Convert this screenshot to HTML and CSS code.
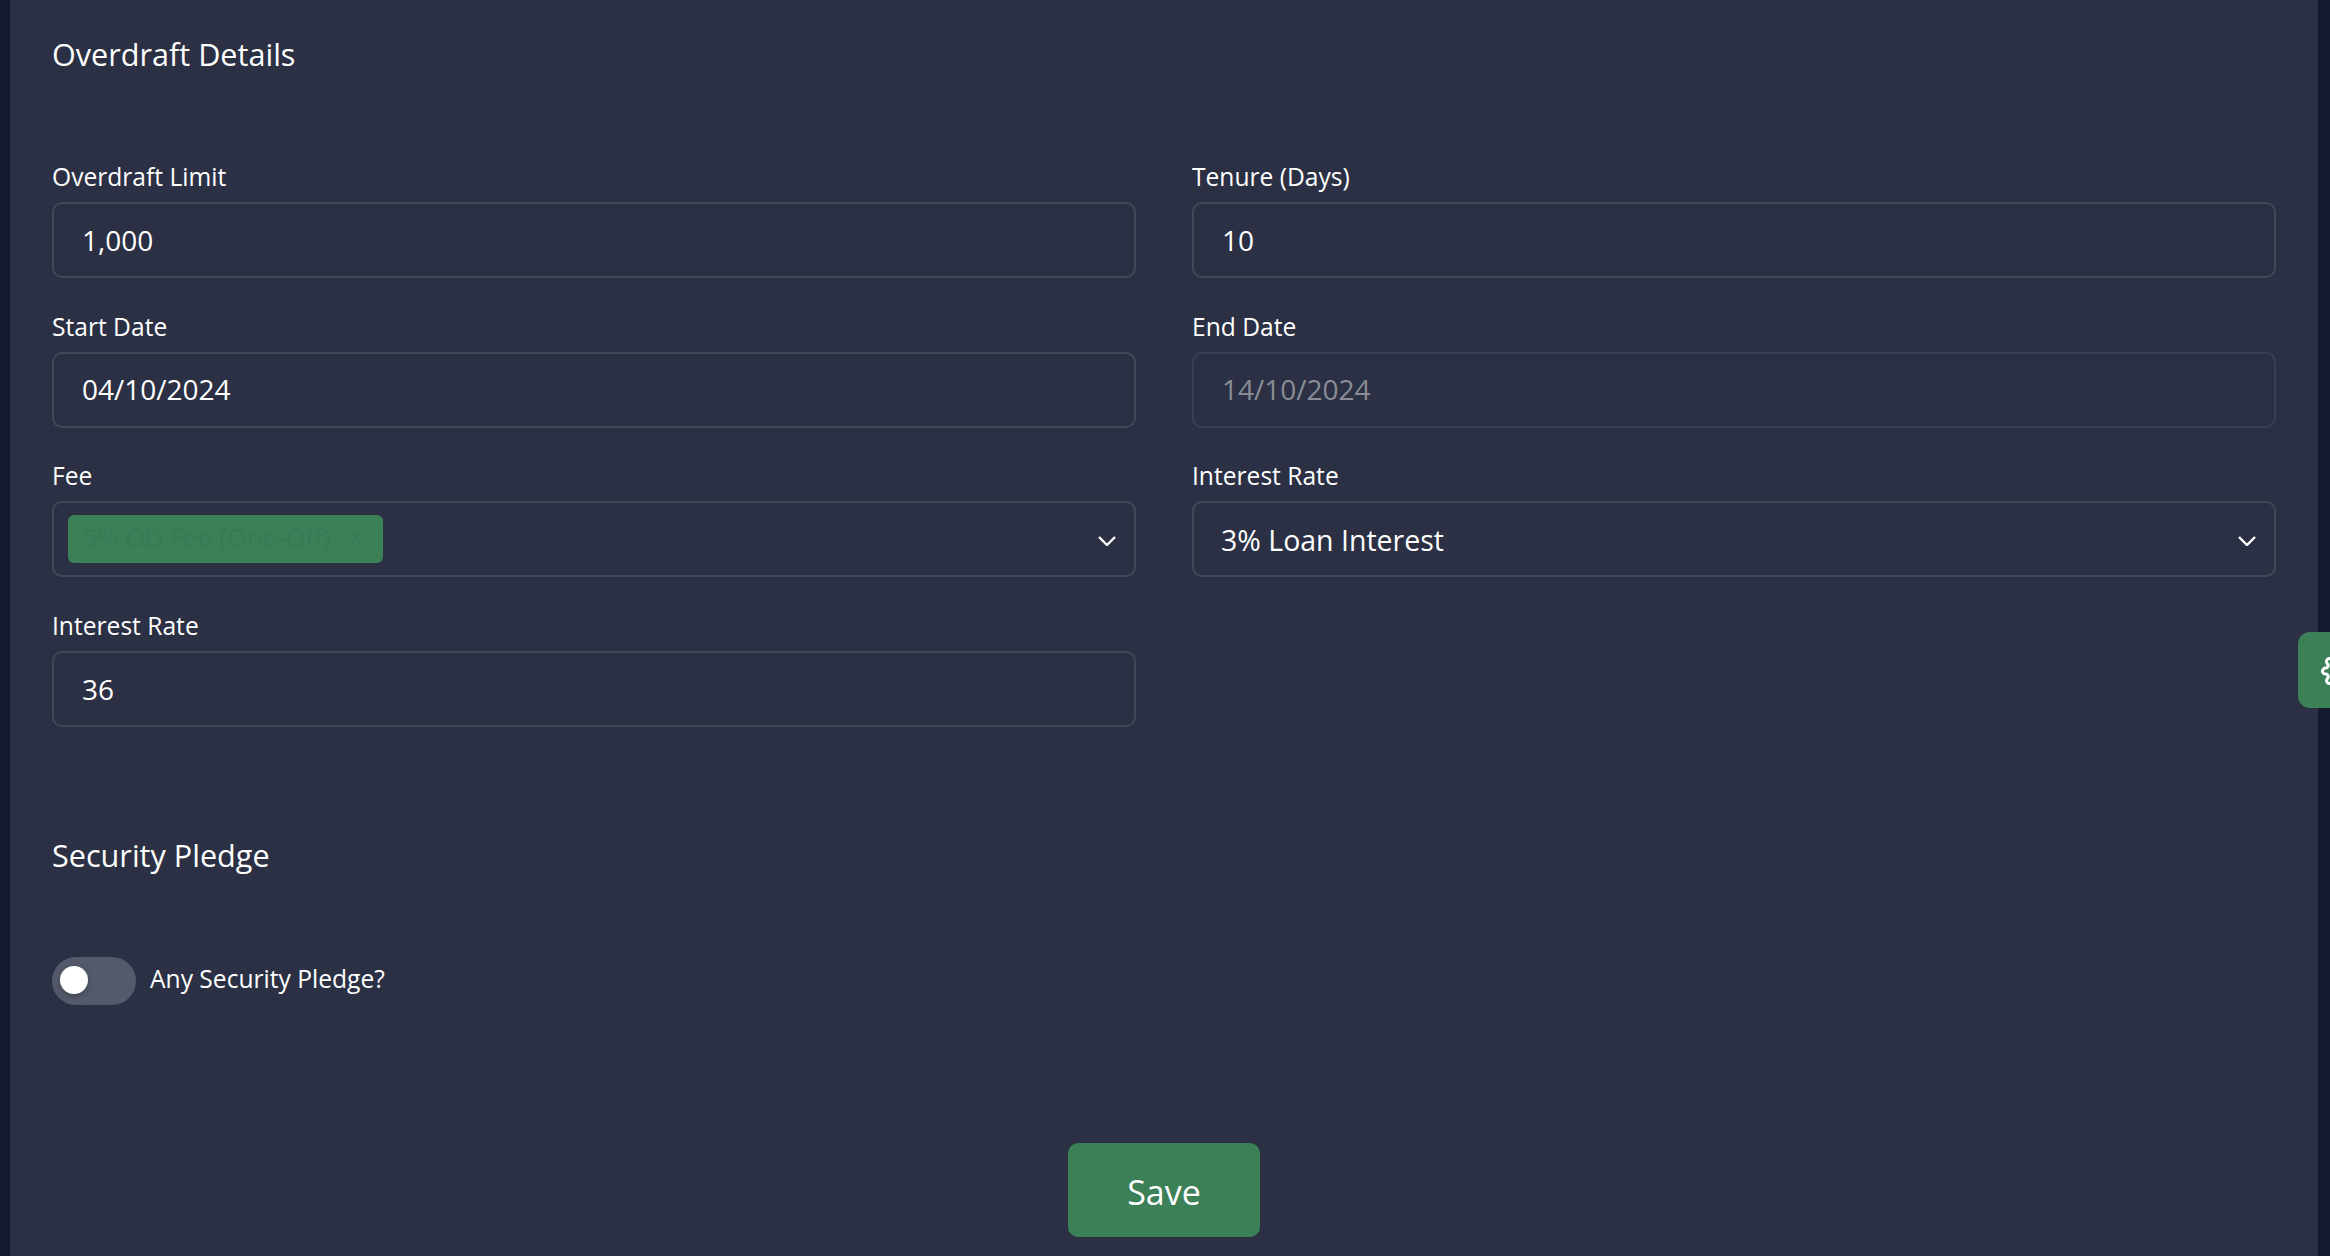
FILE: index.html
```html
<!DOCTYPE html>
<html lang="en">
<head>
    <meta charset="UTF-8">
    <meta name="viewport" content="width=device-width, initial-scale=1.0">
    <title>Overdraft Details</title>
    <link rel="stylesheet" href="styles.css">
</head>
<body>

    <div class="panel">

        <!-- Overdraft Details -->
        <h2 class="section-title">Overdraft Details</h2>
        <div class="form-grid">
            <div class="field">
                <label>Overdraft Limit</label>
                <div class="input">1,000</div>
            </div>
            <div class="field">
                <label>Tenure (Days)</label>
                <div class="input">10</div>
            </div>
            <div class="field">
                <label>Start Date</label>
                <div class="input">04/10/2024</div>
            </div>
            <div class="field">
                <label>End Date</label>
                <div class="input disabled">14/10/2024</div>
            </div>
            <div class="field">
                <label>Fee</label>
                <div class="input select fee-select">
                    <span class="chip">5% OD Fee (One-Off) <span class="chip-x">×</span></span>
                    <svg class="chevron" viewBox="0 0 18 10"><path d="M1 1l8 8 8-8"/></svg>
                </div>
            </div>
            <div class="field">
                <label>Interest Rate</label>
                <div class="input select">
                    <span class="select-value">3% Loan Interest</span>
                    <svg class="chevron" viewBox="0 0 18 10"><path d="M1 1l8 8 8-8"/></svg>
                </div>
            </div>
            <div class="field">
                <label>Interest Rate</label>
                <div class="input">36</div>
            </div>
        </div>

        <!-- Security Pledge -->
        <h2 class="section-title pledge-title">Security Pledge</h2>
        <div class="toggle-row">
            <span class="toggle"><span class="knob"></span></span>
            <span class="toggle-label">Any Security Pledge?</span>
        </div>

        <div class="actions">
            <button class="save-btn">Save</button>
        </div>
    </div>

    <!-- Settings tab -->
    <div class="side-tab">
        <svg viewBox="0 0 24 24"><circle cx="12" cy="12" r="3"/><path d="M19.4 15a1.65 1.65 0 0 0 .33 1.82l.06.06a2 2 0 0 1 0 2.83 2 2 0 0 1-2.83 0l-.06-.06a1.65 1.65 0 0 0-1.82-.33 1.65 1.65 0 0 0-1 1.51V21a2 2 0 0 1-2 2 2 2 0 0 1-2-2v-.09A1.65 1.65 0 0 0 9 19.4a1.65 1.65 0 0 0-1.82.33l-.06.06a2 2 0 0 1-2.83 0 2 2 0 0 1 0-2.83l.06-.06a1.65 1.65 0 0 0 .33-1.82 1.65 1.65 0 0 0-1.51-1H3a2 2 0 0 1-2-2 2 2 0 0 1 2-2h.09A1.65 1.65 0 0 0 4.6 9a1.65 1.65 0 0 0-.33-1.82l-.06-.06a2 2 0 0 1 0-2.83 2 2 0 0 1 2.83 0l.06.06a1.65 1.65 0 0 0 1.82.33H9a1.65 1.65 0 0 0 1-1.51V3a2 2 0 0 1 2-2 2 2 0 0 1 2 2v.09a1.65 1.65 0 0 0 1 1.51 1.65 1.65 0 0 0 1.82-.33l.06-.06a2 2 0 0 1 2.83 0 2 2 0 0 1 0 2.83l-.06.06a1.65 1.65 0 0 0-.33 1.82V9a1.65 1.65 0 0 0 1.51 1H21a2 2 0 0 1 2 2 2 2 0 0 1-2 2h-.09a1.65 1.65 0 0 0-1.51 1z"/></svg>
    </div>

</body>
</html>
```

FILE: styles.css
```css
html, body {
    margin: 0;
    padding: 0;
    height: 100%;
    overflow: hidden;
}
body {
    font-family: "Open Sans", "Noto Sans", sans-serif;
    background-color: #141a2e;
    color: #fff;
    padding: 0 12px 0 10px;
    box-sizing: border-box;
}
.panel {
    background-color: #2b3044;
    height: 100%;
    padding: 0 42px;
    box-sizing: border-box;
}
.section-title {
    margin: 0;
    padding-top: 34px;
    font-size: 30.6px;
    line-height: 41px;
    font-weight: 400;
}
.form-grid {
    display: grid;
    grid-template-columns: 1fr 1fr;
    column-gap: 56px;
    row-gap: 31.7px;
    margin-top: 85px;
}
.field label {
    display: block;
    font-size: 24.6px;
    line-height: 33px;
    margin-bottom: 9px;
}
.input {
    height: 76px;
    box-sizing: border-box;
    border: 2px solid #434859;
    border-radius: 10px;
    padding: 0 28px 1px;
    display: flex;
    align-items: center;
    font-size: 28px;
}
.input.disabled {
    color: #8a8d96;
    border-color: #3a3f52;
}
.select {
    justify-content: space-between;
    padding-right: 18px;
}
.select-value {
    font-size: 28.5px;
    padding-top: 3px;
    margin-left: -1px;
}
.fee-select {
    padding-left: 14px;
    padding-bottom: 0;
}
.chip {
    background-color: #3c8058;
    color: #387a55;
    border-radius: 6px;
    height: 48px;
    width: 315px;
    box-sizing: border-box;
    padding: 0 14px 4px;
    display: flex;
    align-items: center;
    font-size: 25.8px;
    white-space: pre;
}
.chip-x {
    margin-left: 12px;
}
.chevron {
    width: 18px;
    height: 10px;
    margin-top: 4px;
    fill: none;
    stroke: #fff;
    stroke-width: 2.4;
}
.pledge-title {
    padding-top: 0;
    margin-top: 108px;
}
.toggle-row {
    display: flex;
    align-items: center;
    gap: 14px;
    margin-top: 81px;
}
.toggle {
    width: 84px;
    height: 48px;
    border-radius: 24px;
    background-color: #545a6b;
    display: flex;
    align-items: center;
    padding: 0 0 2px 8px;
    box-sizing: border-box;
}
.knob {
    width: 28px;
    height: 28px;
    border-radius: 50%;
    background-color: #fff;
    box-shadow: 0 2px 6px rgba(0, 0, 0, 0.25);
}
.toggle-label {
    font-size: 24.6px;
    padding-bottom: 5px;
}
.actions {
    display: flex;
    justify-content: center;
    margin-top: 138px;
}
.save-btn {
    width: 192px;
    height: 94px;
    border: none;
    border-radius: 10px;
    padding: 3px 0 0;
    background-color: #3c8058;
    color: #fff;
    font-family: inherit;
    font-size: 34px;
}
.side-tab {
    position: absolute;
    top: 632px;
    right: 0;
    width: 32px;
    height: 76px;
    background-color: #3c8058;
    border-radius: 12px 0 0 12px;
    overflow: hidden;
}
.side-tab svg {
    position: absolute;
    left: 23px;
    top: 21px;
    width: 36px;
    height: 36px;
    fill: none;
    stroke: #fff;
    stroke-width: 2;
}
```
